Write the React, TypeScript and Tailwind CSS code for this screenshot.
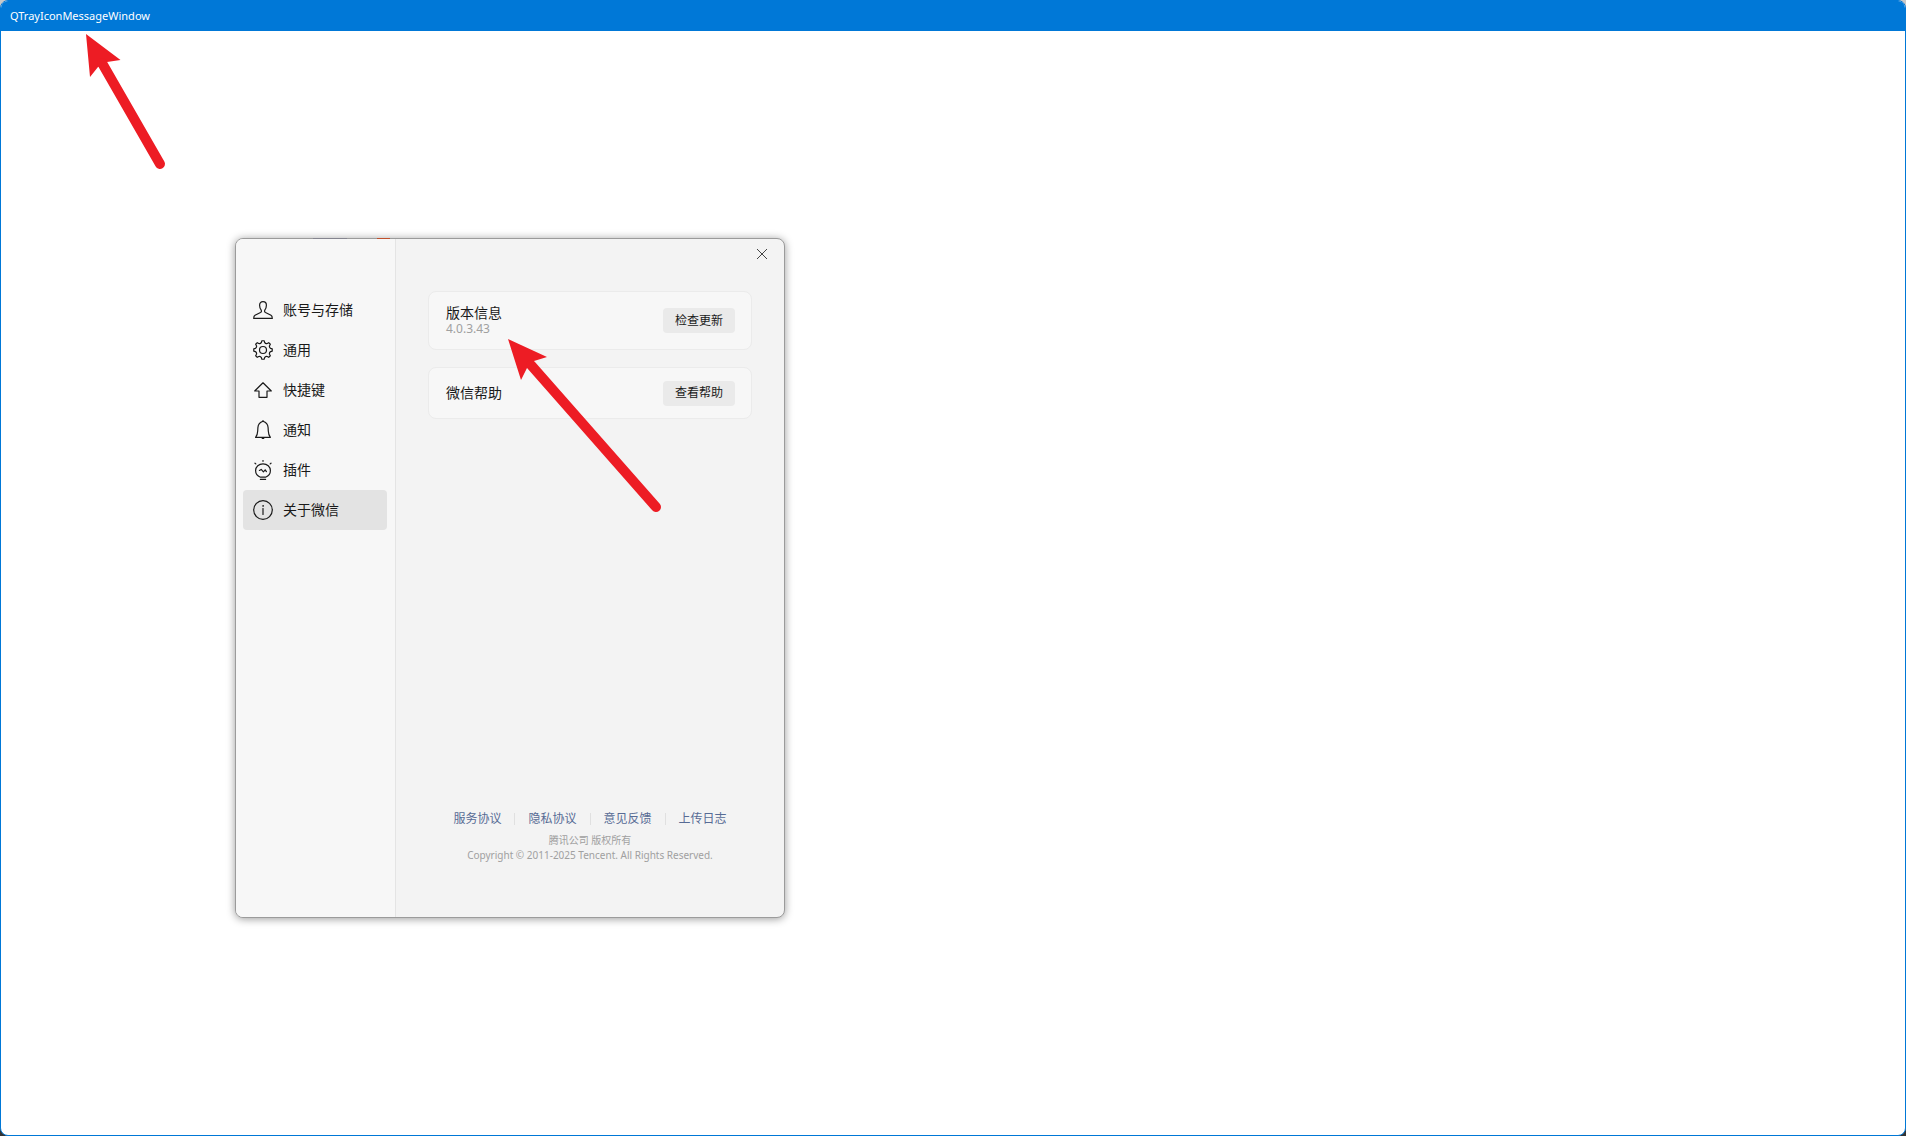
import { useState } from 'react';
import type { ReactNode } from 'react';

// Outline of an eight-tooth cog, drawn on a 20x20 grid
function gearPath() {
  const point = (radius: number, deg: number) => {
    const a = (deg * Math.PI) / 180;
    return `${(10 + radius * Math.sin(a)).toFixed(2)} ${(10 - radius * Math.cos(a)).toFixed(2)}`;
  };
  const parts: string[] = [];
  for (let i = 0; i < 8; i++) {
    const d = i * 45;
    parts.push(`${i === 0 ? 'M' : 'L'}${point(9.3, d - 7)}L${point(9.3, d + 7)}`);
    parts.push(`L${point(7.8, d + 12)}Q${point(6.5, d + 22.5)} ${point(7.8, d + 33)}`);
  }
  return parts.join('') + 'Z';
}

function Icon({ children }: { children: ReactNode }) {
  return (
    <svg viewBox="0 0 20 20" className="size-5 shrink-0" fill="none" stroke="currentColor" strokeWidth="1.2" strokeLinejoin="round" strokeLinecap="round" aria-hidden="true">
      {children}
    </svg>
  );
}

const menu = [
  {
    id: 'account',
    label: '账号与存储',
    icon: <path d="M10 1.6C7.8 1.6 6.6 3.2 6.6 5.2C6.6 7.8 7.5 9.2 8.2 10.2C8.7 11 8.4 12 7.5 12.5L2 15.2C1 15.7 .7 16.5 .7 18.4H19.3C19.3 16.5 19 15.7 18 15.2L12.5 12.5C11.6 12 11.3 11 11.8 10.2C12.5 9.2 13.4 7.8 13.4 5.2C13.4 3.2 12.2 1.6 10 1.6Z" />,
  },
  {
    id: 'general',
    label: '通用',
    icon: (
      <>
        <path d={gearPath()} />
        <circle cx="10" cy="10" r="3.5" />
      </>
    ),
  },
  {
    id: 'shortcuts',
    label: '快捷键',
    icon: <path d="M10 2.8L18.3 11H14V17.3H6V11H1.7Z" />,
  },
  {
    id: 'notifications',
    label: '通知',
    icon: (
      <>
        <path d="M2.6 17.4C4 15.6 4.6 14 4.7 11L4.9 7.6C5.1 4.4 7.2 2.2 10 1.3C12.8 2.2 14.9 4.4 15.1 7.6L15.3 11C15.4 14 16 15.6 17.4 17.4Z" />
        <path d="M10 .6V1.3M9.2 18.5H10.8" />
      </>
    ),
  },
  {
    id: 'plugins',
    label: '插件',
    icon: (
      <>
        <path d="M7.4 17.2C4.5 16.2 2.6 13.6 2.6 10.6C2.6 6.6 5.9 3.8 10 3.8S17.4 6.6 17.4 10.6C17.4 13.6 15.5 16.2 12.6 17.2Z" />
        <path d="M6.4 10.4L8.2 9.4L10.4 11.8L12.2 9.8L13.4 11.6M7.4 19.4H12.6M10 .5V1.3M2 3.2L2.8 3.9M18 3.2L17.2 3.9" />
      </>
    ),
  },
  {
    id: 'about',
    label: '关于微信',
    icon: (
      <>
        <circle cx="10" cy="10" r="9.3" />
        <path d="M10 8.6V14.4" />
        <circle cx="10" cy="5.9" r=".5" fill="currentColor" strokeWidth=".6" />
      </>
    ),
  },
];

const links = ['服务协议', '隐私协议', '意见反馈', '上传日志'];

function Card({ title, detail, action }: { title: string; detail?: string; action: string }) {
  return (
    <section className="flex min-h-[52px] items-center justify-between rounded-lg border border-[#ebebeb] bg-[#f7f7f7] py-2 pr-4 pl-[17px]">
      <div>
        <h2 className="text-sm leading-4">{title}</h2>
        {detail && <p className="text-xs leading-4 text-[#a0a0a0]">{detail}</p>}
      </div>
      <button type="button" className="h-[25px] w-[72px] rounded-sm bg-[#eaeaea] text-xs hover:bg-[#e0e0e0]">{action}</button>
    </section>
  );
}

function SettingsDialog() {
  const [active, setActive] = useState('about');

  return (
    <div role="dialog" aria-label="关于微信" className="absolute top-[238px] left-[235px] flex h-[680px] w-[550px] overflow-hidden rounded-lg border border-[#9b9b9b] bg-[#f3f3f3] text-[#1a1a1a] shadow-[0_1px_8px_rgba(0,0,0,0.4)]">
      <nav className="flex w-40 flex-col border-r border-[#e4e4e4] bg-[#f7f7f7] pt-[51px] pr-2 pl-[7px]">
        {menu.map(item => (
          <button
            key={item.id}
            type="button"
            onClick={() => setActive(item.id)}
            className={`flex h-10 items-center gap-2.5 rounded px-2.5 text-left text-sm ${active === item.id ? 'bg-[#e3e3e3]' : ''}`}
          >
            <Icon>{item.icon}</Icon>
            {item.label}
          </button>
        ))}
      </nav>

      <main className="flex flex-1 flex-col">
        <div className="flex h-[30px] justify-end pr-3">
          <button type="button" aria-label="关闭" className="flex w-5 items-center justify-center text-[#444]">
            <svg viewBox="0 0 12 12" className="size-3" stroke="currentColor" strokeWidth="1" aria-hidden="true">
              <path d="M1 1L11 11M11 1L1 11" />
            </svg>
          </button>
        </div>
        <div className="grid grid-rows-[59px_52px] gap-[17px] px-8 pt-[22px]">
          <Card title="版本信息" detail="4.0.3.43" action="检查更新" />
          <Card title="微信帮助" action="查看帮助" />
        </div>
        <footer className="mt-auto flex flex-col items-center pb-[54px] text-[10px] leading-[15px] text-[#a0a0a0]">
          <div className="mb-1.5 flex items-center">
            {links.map((label, i) => (
              <div key={label} className="flex items-center">
                {i > 0 && <span className="mx-[13px] h-3 w-px bg-[#e0e0e0]" />}
                <a href="#" className="text-xs text-[#576b95]">{label}</a>
              </div>
            ))}
          </div>
          <p>腾讯公司 版权所有</p>
          <p>Copyright © 2011-2025 Tencent. All Rights Reserved.</p>
        </footer>
      </main>
    </div>
  );
}

// Hand-drawn style pointers that lie over both windows
function Arrows() {
  return (
    <svg className="pointer-events-none absolute top-0 left-0 h-[540px] w-[700px]" fill="#ed1c24" stroke="#ed1c24" strokeLinecap="round" aria-hidden="true">
      <path d="M86 34L120.500 60L107 62L98 67L90 77Z" stroke="none" />
      <path d="M102 63L160 164" strokeWidth="10" />
      <path d="M508 339L547 357L534 361L527 368L521 380Z" stroke="none" />
      <path d="M531 365L656 507" strokeWidth="10" />
    </svg>
  );
}

export default function App() {
  return (
    <div className="min-h-screen bg-linear-to-b from-[#c8c8c8] to-[#333] font-['Noto_Sans','Noto_Sans_CJK_SC',sans-serif]">
      <div className="relative flex min-h-screen flex-col overflow-hidden rounded-lg border border-[#0078d7] bg-white">
        <header className="flex h-[30px] items-center bg-[#0078d7] px-[9px]">
          <h1 className="text-[11px] text-white">QTrayIconMessageWindow</h1>
        </header>
      </div>
      <SettingsDialog />
      {/* slivers of the window behind that show along the dialog's top edge */}
      <span className="absolute top-[238px] left-[313px] h-px w-[34px] bg-[#85858f]" />
      <span className="absolute top-[238px] left-[377px] h-px w-[13px] bg-[#c0502c]" />
      <Arrows />
    </div>
  );
}
